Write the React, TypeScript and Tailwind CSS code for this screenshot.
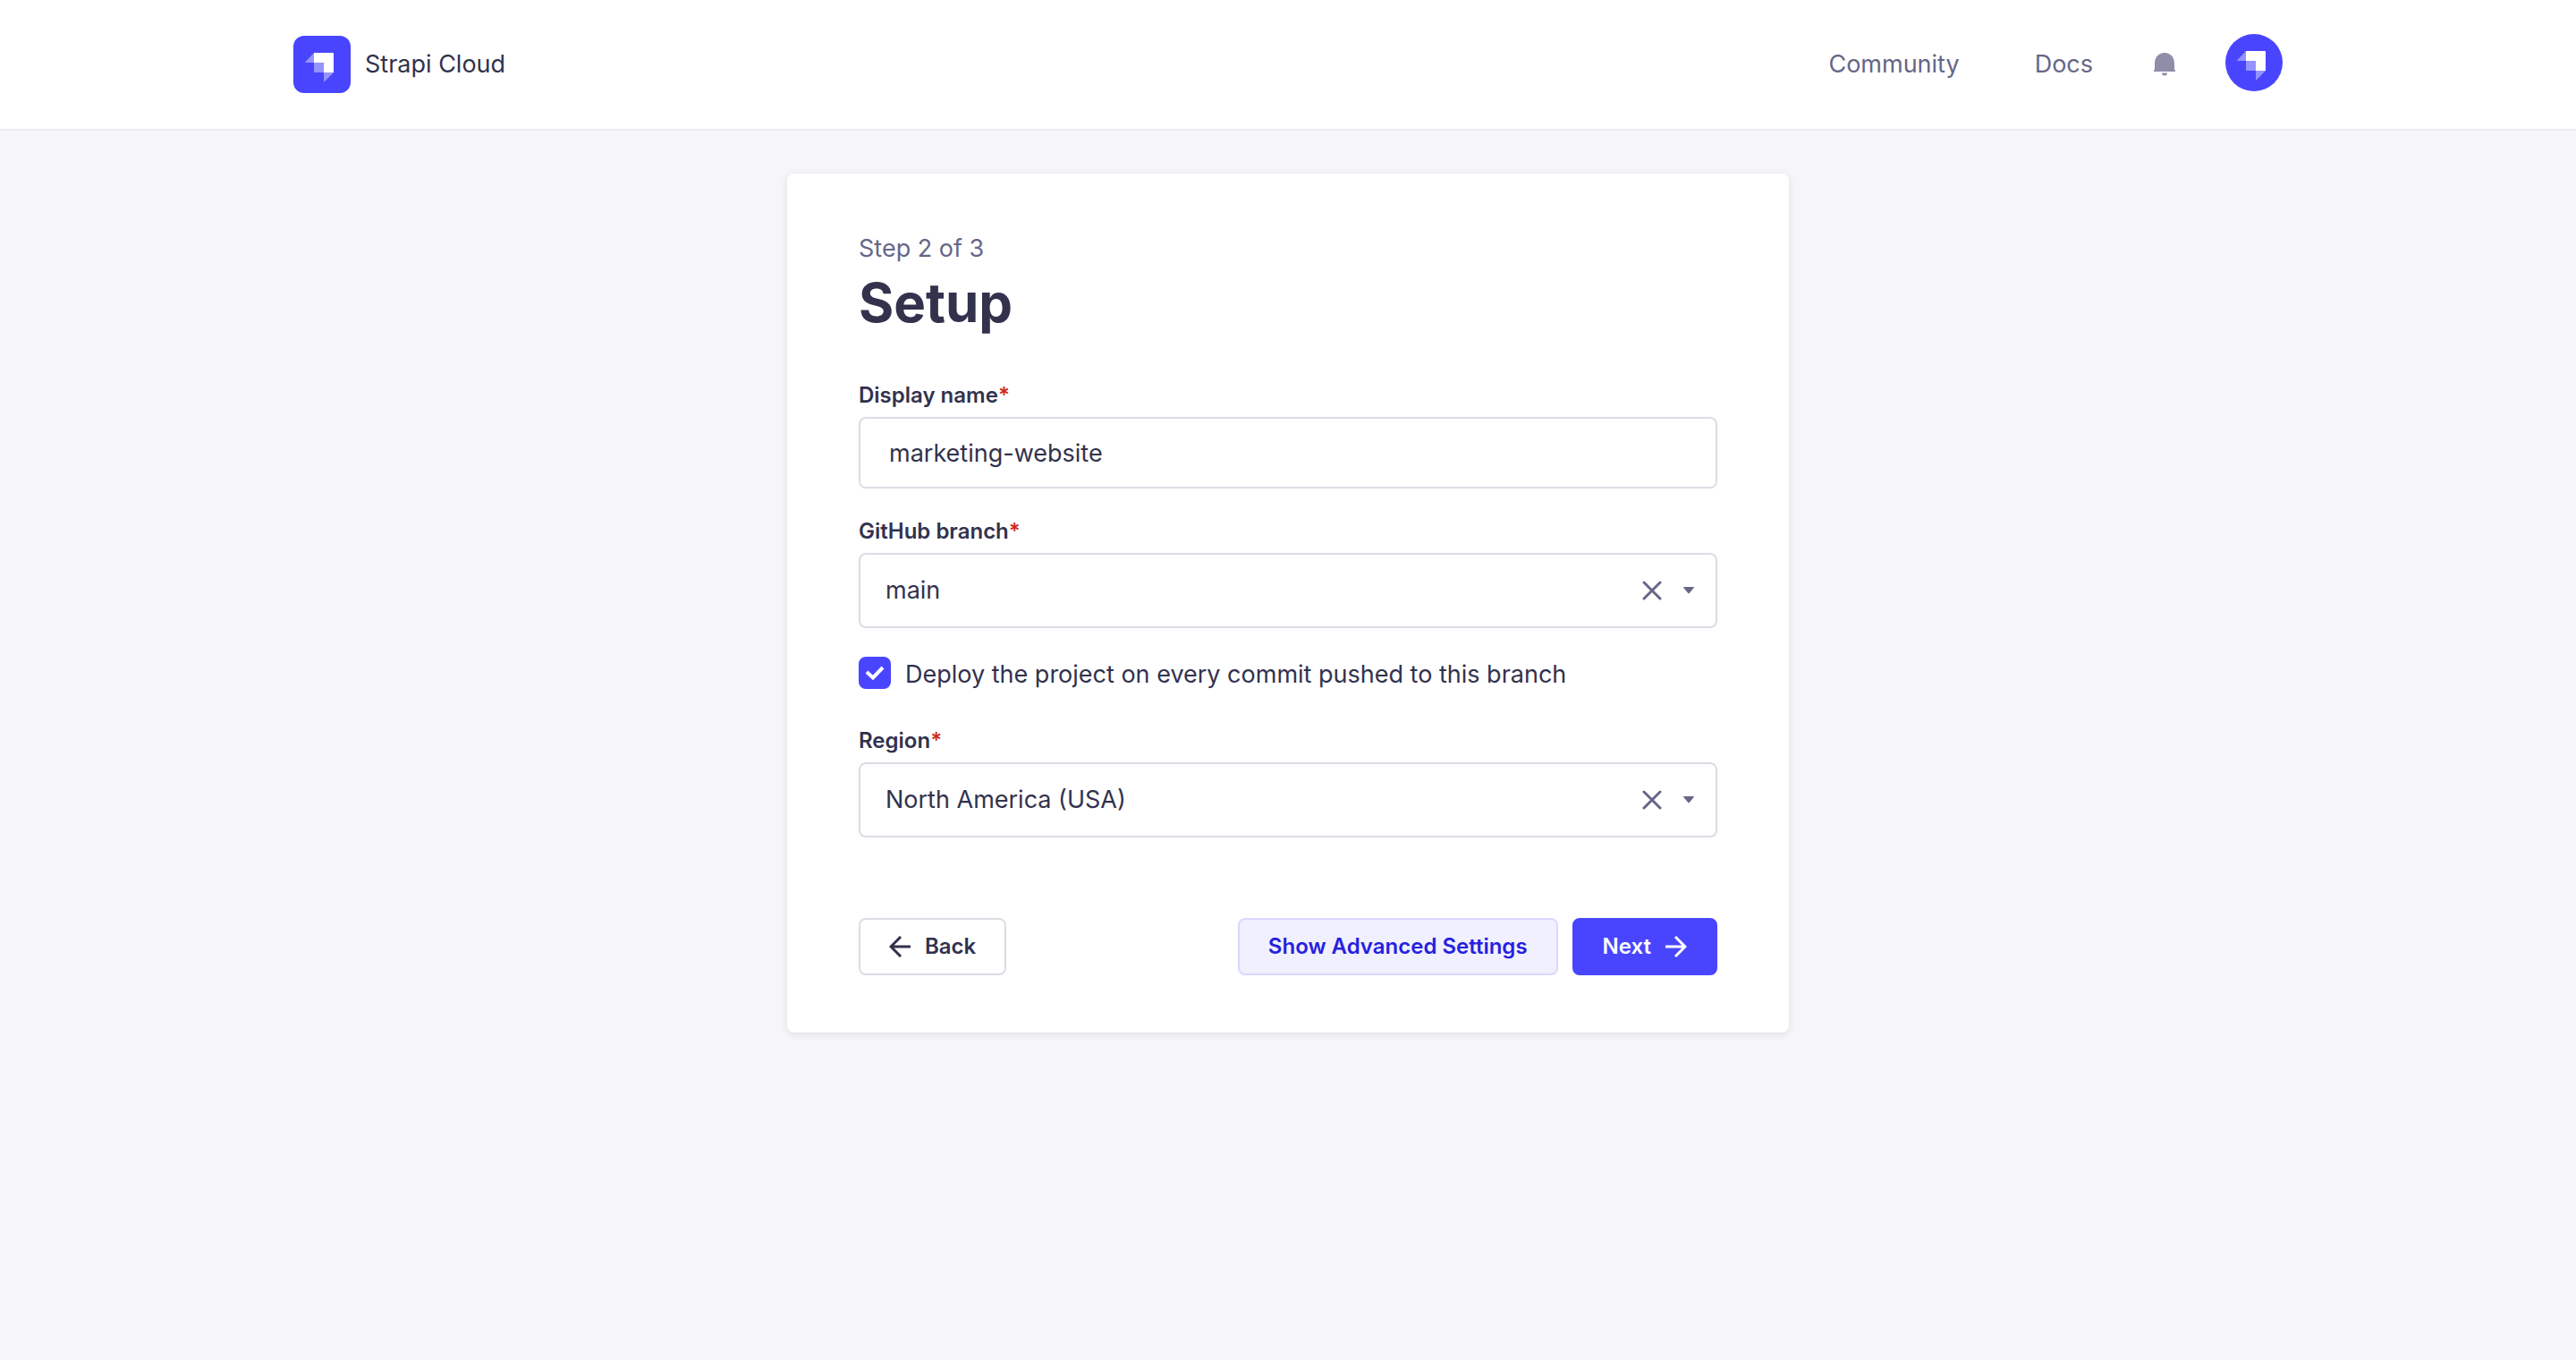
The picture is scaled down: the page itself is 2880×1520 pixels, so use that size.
import { useState, type ReactNode } from "react";

function StrapiMark() {
  return (
    <svg viewBox="0 0 64 64" className="size-16" aria-hidden="true">
      <path d="M23 19h21.5a.5.5 0 0 1 .5.5V41H34V30H23z" fill="#fff" />
      <path d="M23 30h10.5a.5.5 0 0 1 .5.5V41H23.5a.5.5 0 0 1-.5-.5z" fill="#9593ff" />
      <path d="M23 19v11H13.3a.3.3 0 0 1-.2-.5z" fill="#9593ff" />
      <path d="M34 41h11L34.5 51.5a.3.3 0 0 1-.5-.2z" fill="#9593ff" />
    </svg>
  );
}

function BellIcon() {
  return (
    <svg viewBox="0 0 24 26" className="h-[26px] w-6" fill="#8e8ea9" aria-hidden="true">
      <path d="M1 11.5C1 5 5.500 0 12 0s11 5 11 11.5V19h.5a.5.5 0 0 1 .5.5V21H0v-1.5a.5.5 0 0 1 .5-.5H1z" />
      <path d="M9 22.500h6a3 3 0 0 1-6 0z" />
    </svg>
  );
}

function ArrowIcon({ back = false }: { back?: boolean }) {
  return (
    <svg viewBox="0 0 24 24" className="size-6" fill="none" stroke="currentColor" strokeWidth="3" aria-hidden="true">
      {back ? <path d="M24 12H2M13 1 2 12l11 11" /> : <path d="M0 12h22M11 1l11 11-11 11" />}
    </svg>
  );
}

function FieldLabel({ htmlFor, children }: { htmlFor: string; children: ReactNode }) {
  return (
    <label htmlFor={htmlFor} className="text-[24px] leading-8 font-semibold">
      {children}
      <span className="text-[#d02b20]">*</span>
    </label>
  );
}

type SelectFieldProps = { id: string; label: string; initial: string; options: string[] };

function SelectField({ id, label, initial, options }: SelectFieldProps) {
  const [value, setValue] = useState(initial);
  return (
    <div className="flex flex-col gap-2">
      <FieldLabel htmlFor={id}>{label}</FieldLabel>
      <div className="relative flex h-[84px] items-center rounded-lg border-2 border-[#dcdce4] bg-white">
        <select
          id={id}
          value={value}
          onChange={(e) => setValue(e.target.value)}
          className="h-full w-full appearance-none rounded-lg bg-transparent pr-24 pl-7 text-[27px]"
        >
          <option value="" />
          {options.map((o) => (
            <option key={o}>{o}</option>
          ))}
        </select>
        <div className="pointer-events-none absolute inset-y-0 right-6 flex items-center gap-6">
          <button
            type="button"
            aria-label={`Clear ${label}`}
            onClick={() => setValue("")}
            className="pointer-events-auto text-[#666687]"
          >
            <svg viewBox="0 0 22 22" className="size-[22px]" stroke="currentColor" strokeWidth="3" strokeLinecap="round" aria-hidden="true">
              <path d="M2 2l18 18M20 2 2 20" />
            </svg>
          </button>
          <svg viewBox="0 0 12 8" className="h-2 w-3" fill="#666687" aria-hidden="true">
            <path d="M.5 0h11a.5.5 0 0 1 .4.8L6.400 7.200a.5.5 0 0 1-.8 0L.1.8A.5.5 0 0 1 .5 0z" />
          </svg>
        </div>
      </div>
    </div>
  );
}

export default function App() {
  const [name, setName] = useState("marketing-website");
  const [deploy, setDeploy] = useState(true);

  return (
    <div className="min-h-screen bg-[#f6f6f9] font-[Inter,sans-serif] text-[27px] leading-10 text-[#32324d]">
      <header className="border-b-2 border-[#eaeaef] bg-white">
        <div className="mx-auto flex h-36 max-w-[2224px] items-center justify-between">
          <a href="#" className="flex items-center gap-4">
            <span className="overflow-hidden rounded-xl bg-[#4945ff]">
              <StrapiMark />
            </span>
            Strapi Cloud
          </a>
          <nav className="flex items-center text-[#666687]">
            <a href="#community" className="mr-21">Community</a>
            <a href="#docs" className="mr-17">Docs</a>
            <button type="button" aria-label="Notifications" className="mr-14">
              <BellIcon />
            </button>
            <button type="button" aria-label="Account" className="mb-1 overflow-hidden rounded-full bg-[#4945ff]">
              <StrapiMark />
            </button>
          </nav>
        </div>
      </header>

      <main className="px-8 pt-12">
        <form
          onSubmit={(e) => e.preventDefault()}
          className="mx-auto max-w-[1120px] rounded-lg bg-white px-20 py-16 shadow-[0_2px_8px_rgba(33,33,52,0.1)]"
        >
          <p className="text-[#666687]">Step 2 of 3</p>
          <h1 className="text-[60px] leading-20 font-bold">Setup</h1>

          <div className="mt-12 flex flex-col gap-8">
            <div className="flex flex-col gap-2">
              <FieldLabel htmlFor="name">Display name</FieldLabel>
              <input
                id="name"
                value={name}
                onChange={(e) => setName(e.target.value)}
                className="h-20 w-full rounded-lg border-2 border-[#dcdce4] bg-white px-8 text-[27px]"
              />
            </div>

            <SelectField id="branch" label="GitHub branch" initial="main" options={["main"]} />

            <div className="flex min-h-[46px] items-start gap-4">
              <span className="relative size-9">
                <input
                  id="deploy"
                  type="checkbox"
                  checked={deploy}
                  onChange={(e) => setDeploy(e.target.checked)}
                  className="peer block size-9 appearance-none rounded-lg border-2 border-[#c0c0cf] bg-white checked:border-[#4945ff] checked:bg-[#4945ff]"
                />
                <svg
                  viewBox="0 0 36 36"
                  className="pointer-events-none absolute inset-0 hidden size-9 peer-checked:block"
                  fill="none"
                  stroke="#fff"
                  strokeWidth="4"
                  aria-hidden="true"
                >
                  <path d="M9 17l7 6.500L27 12" />
                </svg>
              </span>
              <label htmlFor="deploy">Deploy the project on every commit pushed to this branch</label>
            </div>

            <SelectField
              id="region"
              label="Region"
              initial="North America (USA)"
              options={["North America (USA)"]}
            />
          </div>

          <div className="mt-[90px] flex items-center justify-between text-[24px] leading-8 font-semibold">
            <button type="button" className="flex h-16 items-center gap-4 rounded-lg border-2 border-[#dcdce4] bg-white px-8">
              <ArrowIcon back />
              Back
            </button>
            <div className="flex gap-4">
              <button type="button" className="h-16 rounded-lg border-2 border-[#d9d8ff] bg-[#f0f0ff] px-8 text-[#271fe0]">
                Show Advanced Settings
              </button>
              <button type="submit" className="flex h-16 items-center gap-4 rounded-lg border-2 border-[#4945ff] bg-[#4945ff] px-8 text-white">
                Next
                <ArrowIcon />
              </button>
            </div>
          </div>
        </form>
      </main>
    </div>
  );
}
